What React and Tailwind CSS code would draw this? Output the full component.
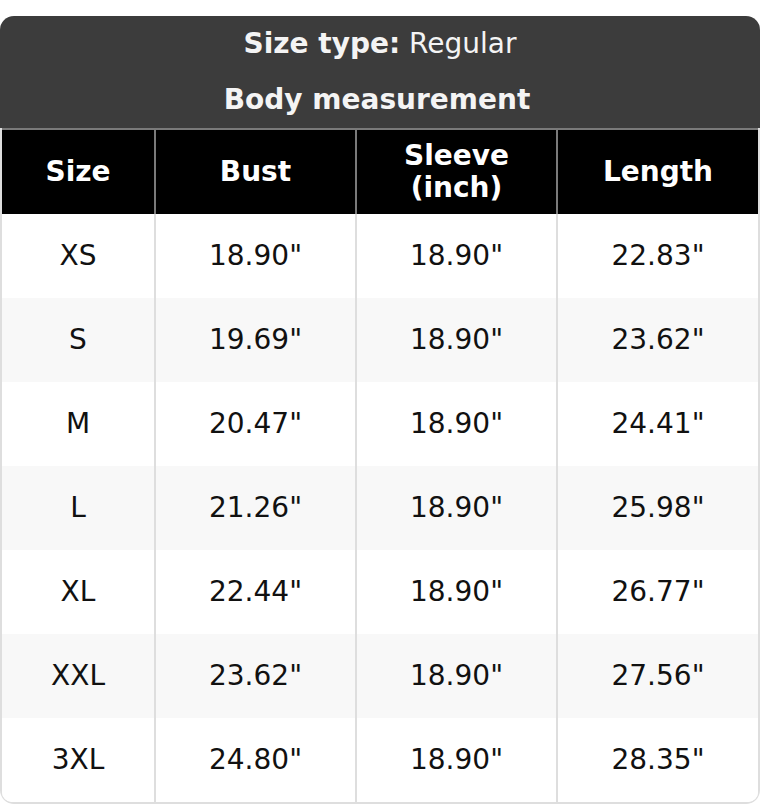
import React from "react";

const rows = [
  ["XS", '18.90"', '18.90"', '22.83"'],
  ["S", '19.69"', '18.90"', '23.62"'],
  ["M", '20.47"', '18.90"', '24.41"'],
  ["L", '21.26"', '18.90"', '25.98"'],
  ["XL", '22.44"', '18.90"', '26.77"'],
  ["XXL", '23.62"', '18.90"', '27.56"'],
  ["3XL", '24.80"', '18.90"', '28.35"'],
];

const widths = ["w-[154px]", "w-[201px]", "w-[201px]", "flex-1"];

export default function App() {
  return (
    <div
      className="w-[760px] h-[804px] bg-white pt-4"
      style={{ fontFamily: '"DejaVu Sans", sans-serif' }}
    >
      <div className="rounded-[14px] overflow-hidden">
        <div className="bg-[#3c3c3c] text-[#f4f4f4] text-[28px] leading-[32px]">
          <div className="h-[56px] flex items-center justify-center">
            <span className="font-bold">Size type:</span>
            <span>&nbsp;Regular</span>
          </div>
          <div className="h-[56px] flex items-center justify-center font-bold pr-[6px]">
            Body measurement
          </div>
        </div>
        <div className="border-x-2 border-b-2 border-[#dedede] rounded-b-[12px] overflow-hidden">
          <div className="flex h-[86px] bg-black text-white font-bold text-[28px] leading-[32px] border-t-2 border-[#7a7a7a]">
            {["Size", "Bust", "Sleeve\n(inch)", "Length"].map((h, i) => (
              <div
                key={i}
                className={`${widths[i]} flex items-center justify-center text-center whitespace-pre-line ${
                  i < 3 ? "border-r-2 border-[#7a7a7a]" : ""
                }`}
              >
                {h}
              </div>
            ))}
          </div>
          {rows.map((r, ri) => (
            <div
              key={ri}
              className={`flex h-[84px] text-[28px] text-[#111] ${
                ri % 2 === 1 ? "bg-[#f8f8f8]" : "bg-white"
              }`}
            >
              {r.map((c, ci) => (
                <div
                  key={ci}
                  className={`${widths[ci]} flex items-center justify-center ${
                    ci < 3 ? "border-r-2 border-[#dedede]" : ""
                  }`}
                >
                  {c}
                </div>
              ))}
            </div>
          ))}
        </div>
      </div>
    </div>
  );
}
